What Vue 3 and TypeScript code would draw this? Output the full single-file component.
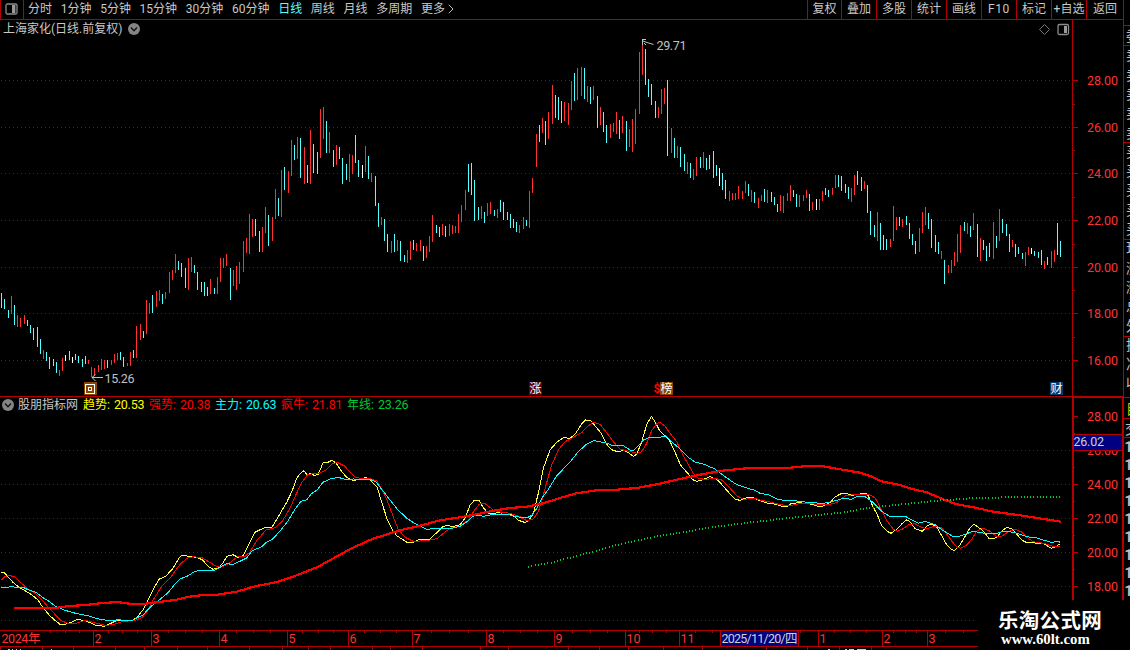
<script setup lang="ts">
type Pt = [number, number]

const periods = ['分时', '1分钟', '5分钟', '15分钟', '30分钟', '60分钟', '日线', '周线', '月线', '多周期', '更多']
const tools = ['复权', '叠加', '多股', '统计', '画线', 'F10', '标记', '+自选', '返回']
const readings = [
  { name: '趋势', value: '20.53', tone: 'yellow' },
  { name: '强势', value: '20.38', tone: 'red' },
  { name: '主力', value: '20.63', tone: 'cyan' },
  { name: '疯牛', value: '21.81', tone: 'red' },
  { name: '年线', value: '23.26', tone: 'green' },
]

// x, high, low, colour (r = up, c = down, w = flat)
const barData = `1 293 308 c,4 299 309 c,8 310 318 c,11 296 314 r,14 305 325 c,17 315 327 r,20 318 327 r,24 315 324 r,27 320 326 c,30 325 333 c,33 328 340 c,37 327 347 c,40 339 354 c,43 350 359 r,46 352 361 c,49 357 369 c,53 359 366 c,56 362 373 c,59 370 376 r,62 358 371 r,65 355 361 w,69 351 360 c,72 357 363 w,75 354 360 c,78 356 363 c,82 359 367 c,85 356 364 c,88 360 364 r,91 367 377 r,94 368 375 r,98 365 372 r,101 359 370 r,104 360 369 r,107 360 368 c,111 360 365 r,114 354 363 r,117 353 360 r,120 352 360 c,123 357 367 c,127 363 366 r,130 352 366 r,133 350 358 c,136 326 358 r,140 324 340 r,143 331 338 c,146 300 334 r,149 303 314 r,152 295 313 c,156 291 307 r,159 290 301 r,162 294 304 c,165 292 299 r,169 272 293 r,172 270 280 r,175 254 273 r,178 261 270 c,181 263 277 c,185 268 288 c,188 258 290 r,191 257 272 r,194 265 273 c,197 272 290 c,201 282 292 c,204 282 296 c,207 287 296 c,210 279 294 r,214 288 294 c,217 277 294 r,220 258 282 r,223 258 268 r,226 254 266 r,230 268 300 c,233 270 286 r,236 266 290 r,239 262 284 r,243 241 272 r,246 238 253 r,249 214 254 r,252 219 237 r,255 219 236 c,259 231 252 c,262 227 252 r,265 207 233 r,268 215 246 c,272 217 241 r,275 189 219 r,278 198 216 c,281 170 217 r,284 167 190 c,288 171 193 r,291 140 176 r,294 145 160 c,297 137 159 r,300 138 178 c,304 147 184 r,307 165 183 c,310 130 184 r,313 144 173 c,317 152 174 c,320 109 158 r,323 107 139 r,326 121 153 c,329 132 153 r,333 150 167 c,336 145 165 r,339 147 159 c,342 158 184 c,346 164 180 c,349 154 182 r,352 155 174 r,355 135 163 c,358 160 177 c,362 165 178 w,365 146 172 r,368 156 179 c,371 173 182 r,375 176 206 c,378 203 227 c,381 217 225 r,384 219 241 c,387 234 252 c,391 241 253 r,394 234 252 c,397 240 251 r,400 241 261 c,404 255 262 c,407 250 263 r,410 241 260 r,413 240 250 c,416 243 251 r,420 240 251 r,423 246 261 c,426 246 258 r,429 236 252 r,432 215 242 r,436 225 233 c,439 227 237 c,442 224 235 r,445 226 237 c,449 224 236 r,452 225 234 r,455 226 233 r,458 214 233 r,461 205 222 r,465 190 210 r,468 164 192 c,471 163 195 c,474 180 221 c,478 207 220 c,481 206 219 r,484 212 223 c,487 203 216 r,490 202 214 r,494 210 216 c,497 209 218 r,500 200 212 c,503 202 220 c,507 212 220 c,510 214 228 c,513 219 228 c,516 222 232 c,519 225 233 r,523 217 229 r,526 220 226 c,529 191 228 r,532 178 193 r,536 134 167 r,539 125 142 c,542 118 133 r,545 121 145 c,548 112 139 r,552 85 124 r,555 95 118 c,558 97 120 c,561 101 123 c,564 102 121 r,568 103 125 r,571 81 110 r,574 73 101 c,577 68 100 r,581 67 96 r,584 68 99 c,587 86 102 r,590 87 104 c,593 86 100 r,597 96 128 c,600 107 125 r,603 112 132 c,606 125 143 c,610 124 138 r,613 123 132 r,616 112 134 r,619 120 139 c,622 116 133 r,626 121 151 c,629 129 147 r,632 119 152 r,635 109 144 r,639 52 114 r,642 43 75 r,645 49 85 c,648 79 97 c,651 84 105 c,655 101 118 c,658 107 118 r,661 89 114 r,664 88 104 r,667 80 156 c,671 128 153 r,674 138 158 c,677 146 158 r,680 147 167 c,684 154 171 c,687 162 174 r,690 163 178 c,693 169 180 r,696 157 176 r,700 157 168 c,703 152 168 r,706 158 170 c,709 155 169 c,713 151 178 c,716 165 176 c,719 168 186 w,722 173 190 c,725 180 199 c,729 191 201 r,732 193 200 r,735 193 200 r,738 186 199 r,742 191 199 r,745 181 193 r,748 184 196 c,751 190 202 r,754 192 203 c,758 198 208 r,761 195 201 r,764 189 202 c,767 190 203 r,771 192 202 c,774 197 205 c,777 204 212 c,780 195 211 r,783 196 213 r,787 193 201 r,790 185 201 r,793 190 197 c,796 194 207 c,799 195 207 r,803 195 201 r,806 190 198 r,809 194 211 c,812 202 210 r,816 199 210 w,819 199 210 r,822 191 201 r,825 188 195 c,828 190 197 c,832 188 195 r,835 175 188 r,838 175 187 c,841 176 191 c,845 184 193 c,848 187 199 c,851 188 202 r,854 175 195 r,857 171 185 c,861 177 191 c,864 181 189 r,867 185 213 c,870 211 235 c,874 225 237 c,877 212 241 r,880 223 250 c,883 235 250 c,886 239 250 c,890 239 247 r,893 206 241 r,896 217 230 r,899 217 226 c,902 219 227 r,906 216 225 c,909 223 239 c,912 234 245 c,915 241 254 c,919 228 252 r,922 212 233 r,925 207 225 r,928 213 229 c,931 219 248 c,935 235 252 c,938 242 254 c,941 251 259 r,944 260 284 c,948 265 273 r,951 260 273 r,954 252 266 r,957 234 262 r,960 225 253 r,964 222 231 c,967 223 234 r,970 226 237 c,973 213 230 r,977 224 257 c,980 238 261 r,983 240 250 c,986 246 261 c,989 243 257 c,993 222 259 r,996 236 248 c,999 209 241 r,1002 219 233 c,1006 224 236 c,1009 234 252 c,1012 240 247 r,1015 244 257 c,1018 247 254 c,1022 253 259 c,1025 252 266 r,1028 247 255 r,1031 248 254 w,1034 251 256 c,1038 252 258 c,1041 250 265 c,1044 261 269 r,1047 257 265 c,1051 251 268 r,1054 250 262 r,1057 223 255 c,1060 241 257 c`

const bars = barData.split(',').map((row) => {
  const [x, high, low, tone] = row.trim().split(' ')
  return { x: Number(x), high: Number(high), low: Number(low), tone }
})

const trend = '1,572.3 4,572.7 8,576.7 13,582.3 19,587.3 25,590.7 32,595 38,600 43,607.7 50,616 55,620.3 60,624.3 65,624.3 71,622.3 78,619.3 87,621.3 95,625 104,626.3 110,623.7 117,620.3 133,620.3 138,616.3 143,609.7 147,601.7 152,591.7 159,579.3 166,576 173,568.3 180,556.7 183,555 188,556.3 197,557.3 203,560.3 208,566.3 213,569.3 218,568 222,564.3 227,556.3 233,554.7 238,557.3 243,555.7 248,546 255,532.3 260,529.7 266,527.3 272,527.3 278,517.3 287,501.7 292,491.3 297,477.7 301,472.7 304,470.7 307,474.7 311,473 314,475.3 318,474.7 323,463 328,462.3 332,460.3 336,463 342,472 347,477.7 353,480.3 358,479.7 362,478.7 366,477.3 370,480 377,486.7 382,503.3 387,518.7 392,529.3 397,536 402,539 407,542.3 414,542 420,539 429,539.7 433,536 438,531.7 443,526.7 447,525.3 453,526.7 460,524.7 465,518.3 470,505.3 474.3,500.3 479.3,500.7 483.3,507.7 488.3,513.3 495,513.3 501,512 508.3,513 513.3,515.7 518.3,520.3 524.3,522.3 527.7,521.7 533.3,513.7 538.3,493.3 543.3,468.3 550,450 556.7,442.3 563.3,437.7 570,438.3 575,434.3 581.7,424 585.7,420 590.7,420.7 595,425.7 601.7,434 606.7,444.3 611.7,449.7 618.3,452 623.3,450 629.3,453.3 633.3,456.3 636.7,454.3 641.7,441.7 646.7,424.7 651.3,416.3 655,421.7 660,431.3 664,435 670,441.3 675,452.3 680.7,465.3 688.3,474 692.7,479.7 696.7,481.3 701.7,480 710,476.7 716.7,479.3 722.3,485 728.3,492 735,499.3 740,500.3 746,498 752.3,497.3 760,500.7 768.3,503.3 776.7,504.3 781.7,506.3 786.7,506.7 791.7,503.3 800,502.7 810,504 818.3,506.3 823.3,506 830,502.7 835,497 841.7,493.3 845.7,493.3 851.7,495.3 860,494 865.7,493 868.3,496 873.3,507.3 877.3,514.7 881.7,526 886.7,531 891,533.3 896.7,529.3 901.7,524 906.7,519.7 910,521.7 915,528.7 922.3,531.3 926.7,526.3 930.7,524 936.7,527 941.7,535.7 946.7,544.7 951.7,549.7 955,550.3 960,545 964,538.3 969.3,529 974,524.3 978.3,527.3 983.3,531 989.3,539 996.7,537.7 1001.7,531 1006.7,527.3 1011.7,528.7 1016.7,534 1021.7,540 1026.7,542.7 1035,543 1043.3,543.7 1051.7,548.3 1056.7,546 1060,544'
const strong = '1,580.3 5,576.7 9,575.3 15,577 20,582 27,588.3 36,594 43,601 48,607 55,614.3 61,620.7 68,623.3 77,623 85,620.3 93,622.3 105,625.3 113,624.7 122,621.7 135,620.3 142,617.7 147,611.7 153,600 162,586 170,578.3 180,564.3 187,558.3 193,556.7 202,557.7 208,561.3 213,564.3 218,567 223,566.7 230,562.7 237,557 245,556.3 250,552 257,540.3 266,530 275,527.7 282,521.7 290,508.3 295,496.7 302,482 308,474.3 320,473 327,469.3 333,463.3 338,462.7 345,466.3 350,472.3 355,477.3 362,478.7 370,478.7 377,481 382,489.3 387,500 393,516 398,529 405,537.3 413,541.3 427,540.7 437,538.7 445,532 450,528.3 460,526 468,520.3 474.3,510.5 479.3,504.3 484,503 488.3,506 493.3,510 500,512 510,513.3 520,516.7 526.7,520.7 533.3,519 538.3,511.7 541.7,501 546.7,482.7 551.7,465 558.3,450 565,441.7 570,439.3 576.7,435.3 581.7,432.7 586.7,427 593.3,422.3 600,424.3 606.7,432.7 613.3,441.7 620,449.3 628.3,451 636.7,453.3 641.7,451.7 646.7,443.3 651.7,430.7 656.7,423.7 660,422.3 665,426 670,433.3 676.7,441.7 681.7,452.7 686.7,461.7 693.3,473.3 698.3,478.3 706.7,479.7 713.3,478 721.7,480 728.3,486.3 736.7,495.7 743.3,499.3 755,498.3 760,500 770,502 780,504.7 790,505.7 803.3,503 816.7,504.3 826.7,505 836.7,502.7 845,496 853.3,494.7 868.3,494.3 875,497.7 880,506.7 886.7,520.3 893.3,529.3 897.3,531.3 903.3,528.7 908.3,525 915,523.7 920,526.7 926.7,528.7 935,526 941.7,528 946.7,534 951.7,541 956.7,547 960.7,548.3 966.7,545 971.7,539.3 976.7,531 983.3,528 990,531.3 996.7,536.3 1001.7,536.3 1008.3,531.7 1015,529.3 1021.7,532 1026.7,537.3 1033.3,541.7 1043.3,543.3 1053.3,546.3 1060,546.7'
const mainForce = '1,587.3 8,587.3 12,586 15,587.3 23,587.3 28,589.7 36,592.3 43,597.7 50,602 55,606 65,610.3 77,613.7 88,615.7 97,618.7 107,620.3 115,620.7 118,619.3 123,620.7 133,620 137,617.7 143,615 150,607.3 160,599.3 168,592.7 175,584 180,579 187,576.3 195,571.3 203,570 215,570 220,567.3 227,563.3 232,564.7 240,561.3 247,557.7 252,550.7 262,546.7 266,542.7 273,538.7 280,531 288,521 295,509 301,501.3 307,499.7 311,494 317,490 323,482.3 330,479 338,477.3 345,479.3 353,479 370,479.3 376,482 382,489.7 390,500 398,510 407,518.3 413,522.3 420,526 427,529.3 437,528.3 450,528.7 460,526.3 467,521.7 473,516.3 476.7,515 483.3,516.3 491.7,514.7 501.7,514 510,515 520,517.3 526.7,518 531.7,515.3 536.7,508.7 541.7,498.3 548.3,489.3 556.7,475.7 563.3,469 569,463.3 578.3,451.7 586.7,444 594,440.7 605,442.7 613.3,445.7 623.3,445.7 630,450 633.3,450.7 638.3,446 643.3,440 650,437.3 660,437.3 665.7,435.7 671.7,441.7 680,449 688.3,457.3 695,462 703.3,464 715,469 725,476.7 736.7,484.7 746.7,488 755,490.3 760,493.3 768.3,494.7 776.7,499 785,500.7 796.7,501 810,502.7 823.3,503.3 833.3,501.3 843.3,498.3 851.7,499.3 856.7,496.7 865,496.7 870,500 875,504.3 881.7,511.3 890,516.7 905,516.3 911.7,519.7 918.3,523.3 925,521.3 935,524.7 943.3,530.7 953.3,536.7 960,536 973.3,531.3 988.3,534 996.7,533.3 1005,531 1015,532.7 1026.7,536.7 1036.7,538 1050,542 1053.3,542.3 1057.7,541 1060,542.3'
const bull = '14.3,608.3 55,608 67,606.3 88,604.7 100,603.3 117,602 132,604 143,604 157,602.3 177,599.7 187,597 203,595 217,594.7 237,591.7 255,586.3 277,582 293,576.7 317,567.3 340,554.7 353,547.7 373,538.7 400,530.3 420,525.7 440,520.3 460,517.3 480,513.7 490,511.3 510,508 526.7,506.7 543.3,503.3 560,498 576.7,493.3 598.3,490 616.7,489.7 636.7,488 656.7,484.3 680,479 700,474.7 721.7,470.7 746.7,468.3 760,468 790,467.7 806.7,466 821.7,466 836.7,468.7 860,472.7 871.7,476.7 881.7,481.3 900,485 913.3,489.3 926.7,492.3 943.3,499.3 956.7,504.3 973.3,507.3 993.3,511.7 1020,515.3 1061,521.7'
const yearKnots: Pt[] = [[528, 566.7], [551.7, 562.7], [576.7, 556], [596.7, 551], [620, 544.3], [643.3, 539.3], [663.3, 535.3], [686.7, 531.7], [713.3, 527], [736.7, 524.3], [760, 521.3], [786.7, 518.3], [820, 515], [843.3, 512.3], [870, 508], [886.7, 506], [910, 503.7], [933.3, 501], [953.3, 499.7], [973.3, 498], [1000, 497.7], [1008, 496.7], [1061, 496.7]]

function valueAt(knots: Pt[], x: number): number {
  for (let i = 1; i < knots.length; i++) {
    const [x0, y0] = knots[i - 1]
    const [x1, y1] = knots[i]
    if (x <= x1) return y0 + ((y1 - y0) * (x - x0)) / (x1 - x0)
  }
  return knots[knots.length - 1][1]
}
const yearDots = bars.filter((b) => b.x > 527).map((b) => ({ x: b.x - 1, y: Math.round(valueAt(yearKnots, b.x)) - 1 }))

const priceLevels = [28, 26, 24, 22, 20, 18, 16].map((v, i) => ({ label: v.toFixed(2), y: [80, 127, 173, 220, 267, 313, 360][i] }))
const priceMinor = [104, 150, 197, 244, 290, 337]
const subLevels = [28, 26, 24, 22, 20, 18].map((v, i) => ({ label: v.toFixed(2), y: 416 + i * 34 }))
const subGrid = [450, 484, 518, 552, 586]

const months = [
  { x: 93, label: '2' }, { x: 151, label: '3' }, { x: 219, label: '4' }, { x: 287, label: '5' },
  { x: 348, label: '6' }, { x: 412, label: '7' }, { x: 486, label: '8' }, { x: 554, label: '9' },
  { x: 625, label: '10' }, { x: 679, label: '11' }, { x: 720, label: '' }, { x: 798, label: '' },
  { x: 818, label: '1' }, { x: 882, label: '2' }, { x: 927, label: '3' },
]
const weekTicks = [50, 65, 79, 108, 122, 137, 168, 185, 202, 236, 253, 270, 302, 318, 333, 364, 380, 396, 431, 449, 468, 503, 520, 537, 572, 590, 607, 639, 652, 666, 695, 712, 800, 834, 850, 866, 893, 905, 916, 945, 963]
const tabEdges = [0, 42, 73, 115, 144, 177, 207, 249, 282, 308, 330, 372, 390, 422, 480, 508, 568, 599, 628, 663, 702, 766, 807, 839, 871]

const quoteRows = ['委', '卖', '卖', '卖', '卖', '卖', '买', '买', '买', '买', '买', '现', '涨', '涨', '总', '外', '换', '净', '收']
const quoteLines = [25, 45, 142, 239, 336, 397, 418, 437]
const tickRows = [0, 1, 2, 3, 4, 5, 6, 7, 8]
</script>

<template>
  <div class="terminal">
    <header class="toolbar">
      <div class="layout-toggle">
        <svg width="13" height="12" viewBox="0 0 13 12"><rect x="1" y="1" width="11" height="10" rx="1.5" fill="none" stroke="#8c8c8c" stroke-width="1.3" /><rect x="7" y="2" width="3.4" height="8" fill="#9a9a9a" /></svg>
      </div>
      <nav class="periods">
        <span v-for="p in periods" :key="p" :class="{ active: p === '日线' }">{{ p }}</span>
        <svg class="more" width="6" height="10" viewBox="0 0 6 10"><path d="M0.8 0.8 5 5 0.8 9.2" fill="none" stroke="#bbb" /></svg>
      </nav>
      <div class="tools"><span v-for="t in tools" :key="t" :class="{ latin: t === 'F10' }">{{ t }}</span></div>
      <div class="edge"></div>
    </header>

    <main class="charts">
      <svg class="canvas" width="1130" height="630" viewBox="0 20 1130 630">
        <g class="grid" shape-rendering="crispEdges">
          <line v-for="l in priceLevels" :key="'p' + l.y" x1="1" x2="1071" :y1="l.y + 0.5" :y2="l.y + 0.5" />
          <line v-for="y in subGrid" :key="'s' + y" x1="1" x2="1071" :y1="y + 0.5" :y2="y + 0.5" />
          <line x1="1" x2="977" y1="620.5" y2="620.5" />
        </g>
        <g shape-rendering="crispEdges">
          <rect v-for="b in bars" :key="b.x" :x="b.x" :y="b.high" width="1" :height="b.low - b.high" :class="'bar-' + b.tone" />
        </g>

        <g class="note">
          <path d="M642 39.5h4M642.5 40v5M643 41l4 1.5 6.5 2M644 43l2 2" />
          <text x="656.5" y="50" textLength="30">29.71</text>
          <path d="M92 377.5h11M92 377.5l3.5-3M92 377.5l3.5 3.5" />
          <text x="104.5" y="383" textLength="30">15.26</text>
        </g>

        <g class="marks">
          <rect x="84" y="382" width="13" height="13" fill="#8a4300" />
          <path d="M85.5 384.5h9v9h-9zM88.5 387.5h3v3h-3z" fill="none" stroke="#fff" shape-rendering="crispEdges" />
          <rect x="529" y="382" width="13" height="13" fill="#5c0000" />
          <text x="529.5" y="393">涨</text>
          <text x="653.5" y="393" class="dollar">$</text>
          <rect x="660" y="382" width="13" height="13" fill="#8a4300" />
          <text x="660.5" y="393">榜</text>
          <rect x="1050" y="382" width="13" height="13" fill="#003c70" />
          <text x="1050.5" y="393">财</text>
        </g>

        <g class="curves" shape-rendering="crispEdges">
          <polyline :points="trend" stroke="#ffff3c" />
          <polyline :points="strong" stroke="#f00" />
          <polyline :points="mainForce" stroke="#00ffff" />
          <polyline :points="bull" stroke="#f00" stroke-width="2.2" />
          <rect v-for="d in yearDots" :key="d.x" :x="d.x" :y="d.y" width="1" height="2" fill="#00c832" />
        </g>

        <g class="frame" shape-rendering="crispEdges">
          <path d="M0 396h1123v1H0zM1072 20h1v376h-1zM1123 20h1v376h-1zM1072 396h52v2h-52zM1072 396h2v204h-2zM1122 396h2v204h-2z" />
          <rect v-for="l in priceLevels" :key="l.y" x="1073" :y="l.y" width="5" height="1" />
          <rect v-for="y in priceMinor" :key="y" x="1073" :y="y" width="2" height="1" />
          <rect v-for="l in subLevels" :key="l.y" x="1074" :y="l.y" width="4" height="1" />
          <rect v-for="l in subLevels.slice(0, 5)" :key="'m' + l.y" x="1074" :y="l.y + 17" width="1" height="1" />
          <path d="M0 630h978v1H0zM0 646h978v1H0z" />
          <rect v-for="m in months" :key="m.x" :x="m.x" y="630" width="1" height="17" />
          <rect v-for="t in weekTicks" :key="t" :x="t" y="631" width="1" height="2" />
          <rect v-for="t in tabEdges" :key="'t' + t" :x="t" y="647" width="1" height="3" />
        </g>
        <g class="tabs" shape-rendering="crispEdges">
          <path d="M8 649h2v1h-2zM12 649h1v1h-1zM16 649h1v1h-1zM20 649h1v1h-1zM51 649h1v1h-1zM828 649h2v1h-2z" fill="#c0c0c0" />
          <path d="M845 649h2v1h-2zM849 649h5v1h-5zM857 649h9v1h-9z" fill="#54ffff" />
        </g>
        <g class="axis">
          <text v-for="l in priceLevels" :key="l.y" x="1087" :y="l.y + 5" textLength="31">{{ l.label }}</text>
          <text v-for="l in subLevels" :key="l.y" x="1087" :y="l.y + 5" textLength="31">{{ l.label }}</text>
          <text x="1.5" y="643" textLength="39">2024年</text>
          <text v-for="m in months" :key="m.x" :x="m.x + 1.5" y="643">{{ m.label }}</text>
        </g>
        <g>
          <rect x="1074" y="434" width="48" height="17" fill="#b40000" />
          <rect x="1074" y="435" width="48" height="15" fill="#000080" />
          <text class="cursor-text" x="1073.5" y="446" textLength="30.5">26.02</text>
          <rect x="721" y="631" width="77" height="15" fill="#000080" />
          <text class="cursor-text" x="721.5" y="642.5" textLength="76">2025/11/20/四</text>
        </g>

        <g class="corner" fill="none">
          <path d="M1044.5 24.5 1049.5 29.5 1044.5 34.5 1039.5 29.5z" stroke="#777" />
          <rect x="1058" y="24.5" width="10.5" height="10" rx="1.5" stroke="#8c8c8c" stroke-width="1.3" />
          <rect x="1064" y="26" width="3" height="7" fill="#9a9a9a" />
        </g>

        <g class="quotes">
          <text v-for="(q, i) in quoteRows" :key="i" x="1126" :y="41 + i * 19.3">{{ q }}</text>
          <text x="1126" y="414" class="gold">目</text>
          <text x="1125" y="434">交</text>
          <text v-for="i in tickRows" :key="'k' + i" x="1124.5" :y="452 + i * 18" class="tick">1</text>
        </g>
        <g class="frame" shape-rendering="crispEdges">
          <rect v-for="y in quoteLines" :key="y" x="1124" :y="y" width="6" height="1" />
        </g>
      </svg>

      <div class="title">
        <span>上海家化(日线.前复权)</span>
        <svg width="12" height="12" viewBox="0 0 12 12"><circle cx="6" cy="6" r="6" fill="#858585" /><path d="M3 4.5 6 7.7 9 4.5" fill="none" stroke="#111" stroke-width="1.3" /></svg>
      </div>
      <div class="indicator">
        <svg width="12" height="12" viewBox="0 0 12 12"><circle cx="6" cy="6" r="6" fill="#858585" /><path d="M3 4.5 6 7.7 9 4.5" fill="none" stroke="#111" stroke-width="1.3" /></svg>
        <span class="source">股朋指标网</span>
        <span v-for="r in readings" :key="r.name" class="reading" :class="r.tone">{{ r.name }}:<b>{{ r.value }}</b></span>
      </div>
      <div class="brand">
        <strong>乐淘公式网</strong>
        <em>www.60lt.com</em>
      </div>
    </main>
  </div>
</template>

<style>
body { margin: 0; background: #000; overflow: hidden; }
</style>

<style scoped>
.terminal { width: 1130px; height: 650px; overflow: hidden; background: #000; color: #c8c8c8; font: 12px/16px Roboto, "Noto Sans CJK SC", sans-serif; }
.toolbar { display: flex; height: 20px; box-sizing: border-box; }
.layout-toggle { width: 24px; height: 20px; box-sizing: border-box; border: solid #b40000; border-width: 0 1px 1px; padding: 3px 0 0 4px; line-height: 0; }
.periods { flex: 1; display: flex; gap: 8.7px; padding-left: 4px; border-bottom: 1px solid #b40000; line-height: 19px; height: 19px; white-space: nowrap; }
.active { color: #54ffff; }
.more { margin: 4px 0 0 -6px; }
.tools { display: grid; grid-template-columns: 34px repeat(7, 35px) 37px; border-bottom: 1px solid #b40000; line-height: 19px; height: 19px; text-align: center; }
.tools span { border-left: 1px solid #b40000; white-space: nowrap; }
.tools .latin { letter-spacing: 0.6px; }
.edge { width: 6px; border-left: 1px solid #b40000; }
.charts { position: relative; height: 630px; }
.canvas { display: block; }
.title { position: absolute; left: 3px; top: 1px; display: flex; align-items: center; gap: 6px; }
.title span { width: 119px; white-space: nowrap; }
.indicator { position: absolute; left: 2px; top: 377px; display: flex; align-items: center; }
.source { width: 65px; margin-left: 4px; }
.reading { width: 66px; white-space: nowrap; }
.reading b { font-weight: normal; font-size: 12.5px; margin-left: 4px; letter-spacing: -0.2px; }
.yellow { color: #ff0; }
.red { color: #f00; }
.cyan { color: #0ff; }
.green { color: #00c832; }
.brand { position: absolute; left: 978px; top: 580px; width: 152px; height: 50px; background: #000; color: #fff; display: flex; flex-direction: column; padding-left: 20px; box-sizing: border-box; }
.brand strong { font: bold 20.5px/24px "Noto Sans CJK SC", sans-serif; margin-top: 7px; letter-spacing: 0.3px; white-space: nowrap; }
.brand em { font: bold 14.8px/16px "Liberation Serif", serif; padding-left: 3px; }
.grid line { stroke: #a00000; stroke-width: 1; stroke-dasharray: 1 3; }
.bar-r { fill: #ff3232; }
.bar-c { fill: #54ffff; }
.bar-w { fill: #fff; }
.note path { fill: none; stroke: #c0c0c0; }
.note text { fill: #c0c0c0; font-size: 12.5px; }
.marks text { fill: #fff; font-size: 12px; }
.marks .dollar { fill: #f00; font-size: 12px; font-weight: bold; }
.curves polyline { fill: none; }
.frame { fill: #b40000; }
.axis text { fill: #ff3232; font-size: 12.5px; }
.cursor-text { fill: #d0d0d0; font-size: 12.5px; }
.quotes text { fill: #c0c0c0; font-size: 14px; }
.quotes .gold { fill: #c8c800; }
.quotes .tick { font-weight: bold; }
</style>
